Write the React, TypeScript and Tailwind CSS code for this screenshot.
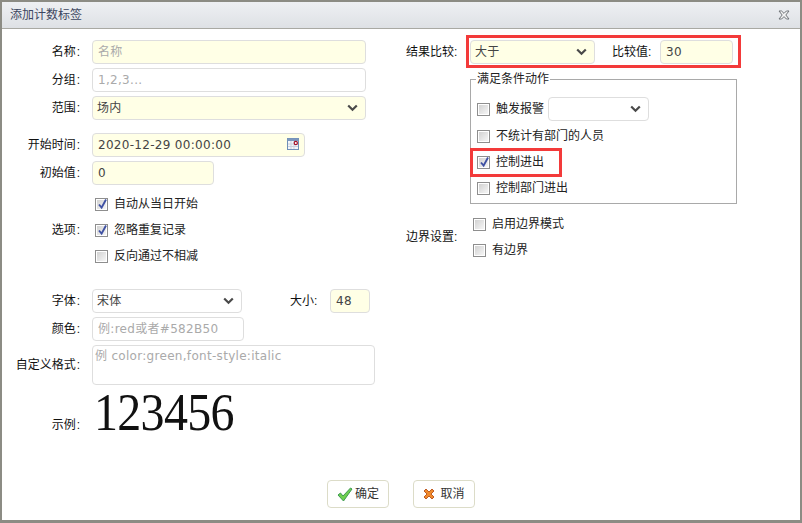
import React from "react";

const FONT = "font-['Liberation_Sans','DejaVu_Sans','Noto_Sans_CJK_SC',sans-serif]";
const FIELD = "font-['DejaVu_Sans','Noto_Sans_CJK_SC',sans-serif] text-[12px] tracking-[0.3px] text-[#444] rounded-[4px] border border-[#dedede] outline-none placeholder:text-[#aaa] placeholder:opacity-100";
const YELLOW = "bg-[#ffffe6]";

function Chevron() {
  return (
    <svg width="11" height="8" viewBox="0 0 11 8" className="absolute right-[8px] top-[8px]">
      <path d="M1.2 1.5 L5.5 5.8 L9.8 1.5" fill="none" stroke="#4a4a4a" strokeWidth="2.2" />
    </svg>
  );
}

function Check({ on }: { on?: boolean }) {
  return (
    <span className="relative block w-[13px] h-[13px] shrink-0 border border-[#8e8e8e] bg-white p-[1px]">
      <span className="block w-full h-full bg-gradient-to-br from-[#d2d2d2] to-[#f6f6f6]" />
      {on && (
        <svg width="11" height="12" viewBox="0 0 11 12" className="absolute left-[1px] top-[-1px]">
          <path d="M2 6.5 L4.6 9.6 L9 1.5" fill="none" stroke="#3f51a3" strokeWidth="1.9" />
        </svg>
      )}
    </span>
  );
}

function CheckRow({ on, text, className = "" }: { on?: boolean; text: string; className?: string }) {
  return (
    <div className={`flex items-center gap-[6px] h-[26px] text-[12px] text-[#222] ${className}`}>
      <Check on={on} />
      <span>{text}</span>
    </div>
  );
}

function Row({ label, children, className = "items-center" }: { label: string; children: React.ReactNode; className?: string }) {
  return (
    <div className={`flex ${className}`}>
      <label className="w-[78px] mr-[12px] text-right text-[12px] text-[#111] whitespace-nowrap">
        {label}
        <span className="ml-[1px]">:</span>
      </label>
      {children}
    </div>
  );
}

function Select({ value, w, yellow }: { value: string; w: string; yellow?: boolean }) {
  return (
    <div className={`relative h-[24px] ${w}`}>
      <div className={`${FIELD} ${yellow ? YELLOW : "bg-white"} h-full px-[4px] leading-[22px]`}>{value}</div>
      <Chevron />
    </div>
  );
}

function Field({ w, yellow, value, placeholder }: { w: string; yellow?: boolean; value?: string; placeholder?: string }) {
  return (
    <input
      readOnly
      defaultValue={value}
      placeholder={placeholder}
      className={`${FIELD} ${yellow ? YELLOW : "bg-white"} ${w} h-[24px] px-[5px]`}
    />
  );
}

function Calendar() {
  return (
    <svg width="12" height="12" viewBox="0 0 12 12" className="absolute right-[6px] top-[6px]">
      <rect x="0.5" y="0.5" width="11" height="11" fill="#f4f6fa" stroke="#6f8fb8" />
      <rect x="0.5" y="0.5" width="11" height="2.5" fill="#7c97bd" />
      <path d="M1 6h10M1 8.5h10M4 3v8M7 3v8" stroke="#c9d2df" strokeWidth="1" />
      <circle cx="8.8" cy="5" r="1.6" fill="#fff" stroke="#a3122a" strokeWidth="1.2" />
    </svg>
  );
}

export default function App() {
  return (
    <div className={`${FONT} w-[802px] h-[523px] flex flex-col bg-white border-x-2 border-t-2 border-b-[3px] border-[#8c8c84]`}>
      <div className="h-[27px] shrink-0 flex items-center justify-between pl-[8px] pr-[10px] border-b border-[#a9a9a3] bg-gradient-to-b from-[#eef0f3] to-[#dee1e5]">
        <span className="text-[12px] text-[#3c4660]">添加计数标签</span>
        <svg width="12" height="10" viewBox="0 0 12 10">
          <path d="M1 1h2.6L6 3.4 8.4 1H11L7.8 5 11 9H8.4L6 6.6 3.6 9H1l3.2-4z" fill="#f4f4f4" stroke="#6f7378" strokeWidth="1" />
        </svg>
      </div>

      <div className="flex flex-1 min-h-0">
        <div className="w-[402px] shrink-0 pt-[11px] flex flex-col">
          <div className="flex flex-col gap-[4px]">
            <Row label="名称"><Field w="w-[274px]" yellow placeholder="名称" /></Row>
            <Row label="分组"><Field w="w-[274px]" placeholder="1,2,3..." /></Row>
            <Row label="范围"><Select w="w-[274px]" value="场内" yellow /></Row>
          </div>
          <div className="flex flex-col gap-[4px] mt-[12px]">
            <Row label="开始时间">
              <div className="relative">
                <Field w="w-[213px]" yellow value="2020-12-29 00:00:00" />
                <Calendar />
              </div>
            </Row>
            <Row label="初始值"><Field w="w-[122px]" yellow value="0" /></Row>
          </div>
          <Row label="选项" className="items-center mt-[6px]">
            <div className="flex flex-col pl-[3px]">
              <CheckRow on text="自动从当日开始" />
              <CheckRow on text="忽略重复记录" />
              <CheckRow text="反向通过不相减" />
            </div>
          </Row>
          <div className="flex flex-col gap-[4px] mt-[20px]">
            <Row label="字体">
              <Select w="w-[150px]" value="宋体" />
              <span className="ml-[48px] w-[35px] text-[12px] text-[#111] whitespace-nowrap">大小:</span>
              <Field w="w-[40px] ml-[5px]" yellow value="48" />
            </Row>
            <Row label="颜色"><Field w="w-[152px]" placeholder="例:red或者#582B50" /></Row>
            <Row label="自定义格式">
              <textarea
                readOnly
                placeholder="例 color:green,font-style:italic"
                className={`${FIELD} bg-white w-[283px] h-[40px] px-[2px] pt-[1px] pb-0 resize-none tracking-[0.2px]`}
              />
            </Row>
          </div>
          <Row label="示例" className="items-baseline">
            <span className="inline-block font-['Liberation_Serif',serif] text-[48px] leading-[56px] tracking-[-0.7px] scale-y-[1.08] text-[#111] ml-[2px]">123456</span>
          </Row>
        </div>

        <div className="flex-1 pl-[2px] pt-[6px] flex flex-col">
          <div className="flex items-center">
            <label className="w-[60px] text-[12px] text-[#111] whitespace-nowrap">结果比较:</label>
            <div className="flex items-center border-[3px] border-[#f33a3a] pl-[1px] pr-[5px] pt-[2px] pb-[1px]">
              <Select w="w-[125px]" value="大于" yellow />
              <span className="ml-[17px] w-[48px] text-[12px] text-[#111] whitespace-nowrap">比较值:</span>
              <Field w="w-[73px]" yellow value="30" />
            </div>
          </div>

          <fieldset className="ml-[64px] w-[267px] h-[132px] mt-[4px] border border-[#a9a9a9] pl-[6px] pr-[6px]">
            <legend className="ml-[-1px] px-[1px] text-[12px] leading-[14px] text-[#222]">满足条件动作</legend>
            <div className="flex flex-col mt-[9px]">
              <div className="flex items-center gap-[4px] h-[28px]">
                <CheckRow text="触发报警" />
                <Select w="w-[101px]" value="" />
              </div>
              <CheckRow text="不统计有部门的人员" />
              <div className="relative w-fit">
                <CheckRow on text="控制进出" />
                <div className="absolute left-[-7px] top-[-1px] w-[92px] h-[29px] border-[3px] border-[#f33a3a]" />
              </div>
              <CheckRow text="控制部门进出" />
            </div>
          </fieldset>

          <div className="flex items-center mt-[7px]">
            <label className="w-[67px] text-[12px] text-[#111] whitespace-nowrap">边界设置:</label>
            <div className="flex flex-col">
              <CheckRow text="启用边界模式" />
              <CheckRow text="有边界" />
            </div>
          </div>
        </div>
      </div>

      <div className="flex justify-center gap-[24px] pb-[12px] shrink-0">
        <button className="w-[62px] h-[28px] flex items-center justify-center gap-[2px] rounded-[4px] border border-[#dcdcc8] bg-white text-[12px] text-[#333]">
          <svg width="16" height="15" viewBox="0 0 16 15">
            <path d="M1 8 L3.5 6 L6 9 L13.5 1 L15 2 L6.5 14 Z" fill="#6fcf4f" stroke="#3e9a52" strokeWidth="1" />
          </svg>
          确定
        </button>
        <button className="w-[62px] h-[28px] flex items-center justify-center gap-[5px] rounded-[4px] border border-[#dcdcc8] bg-white text-[12px] text-[#333]">
          <svg width="12" height="12" viewBox="0 0 12 12">
            <path d="M1 3 L3 1 L6 4 L9 1 L11 3 L8 6 L11 9 L9 11 L6 8 L3 11 L1 9 L4 6 Z" fill="#f08a2c" stroke="#b8501a" strokeWidth="0.9" />
          </svg>
          取消
        </button>
      </div>
    </div>
  );
}
